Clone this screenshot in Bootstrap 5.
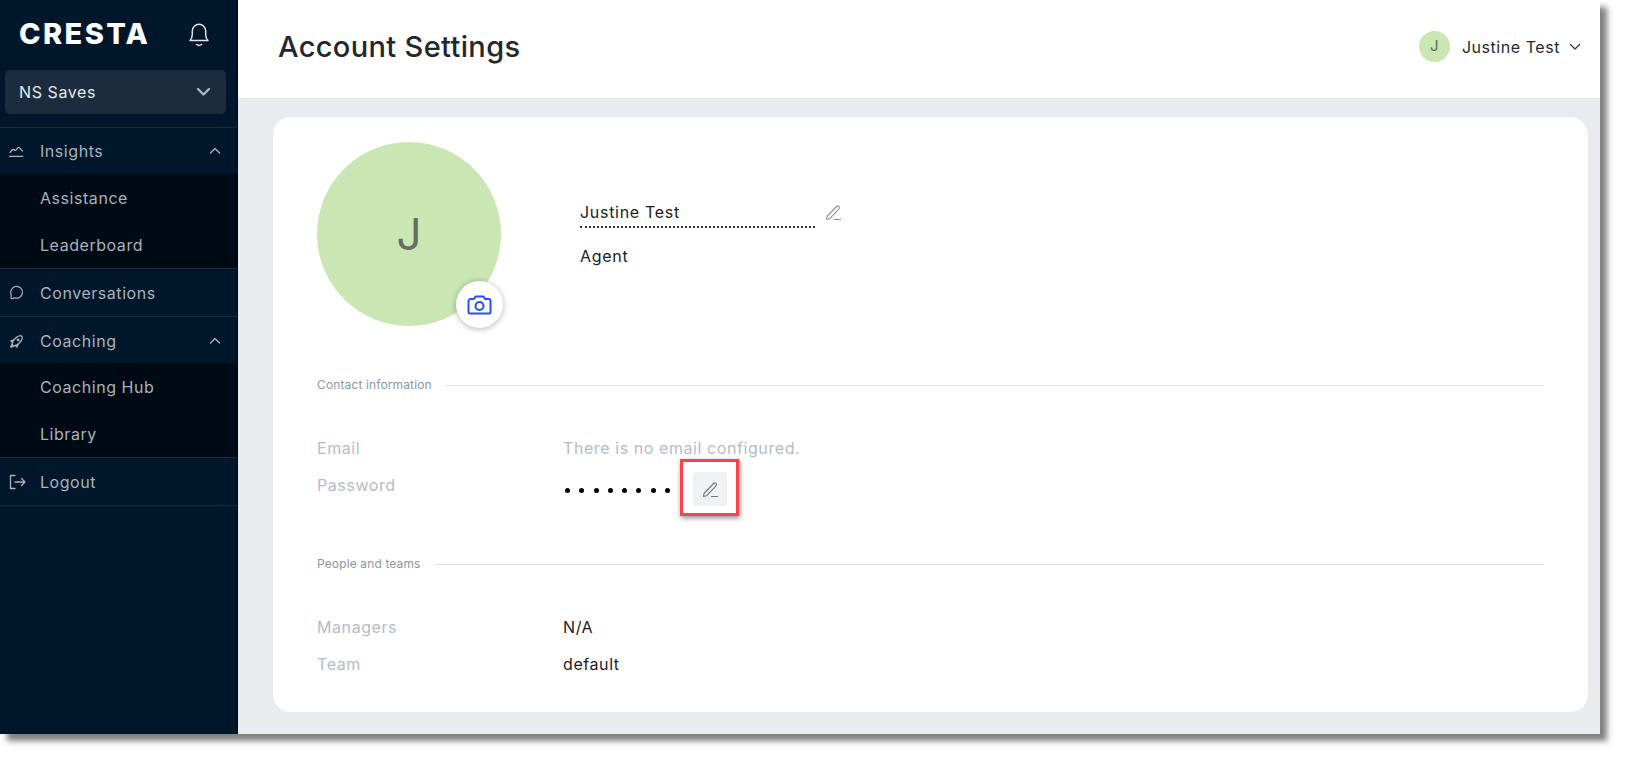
<!DOCTYPE html>
<html lang="en">
<head>
  <meta charset="UTF-8" />
  <meta name="viewport" content="width=device-width, initial-scale=1.0" />
  <title>Account Settings</title>
  <link href="https://cdn.jsdelivr.net/npm/bootstrap@5.3.0/dist/css/bootstrap.min.css" rel="stylesheet" />
  <style>
    html, body {
      height: 100%;
    }
    body {
      background: #fff;
      font-family: Inter, "Liberation Sans", sans-serif;
    }
    #appFrame {
      width: 1600px;
      height: 734px;
      box-shadow: 7px 7px 6px rgba(0, 0, 0, .5);
    }
    #sideBar {
      width: 238px;
      background: #00172b;
      border-right: 1px solid #000;
      color: #a9b2bc;
    }
    #logoRow {
      height: 70px;
      padding: 0 26px 4px 19px;
    }
    #logoText {
      font-weight: 800;
      font-size: 29px;
      line-height: 1;
      letter-spacing: 2.4px;
      color: #fff;
    }
    #bellIcon {
      margin-top: 2px;
    }
    #orgSelect {
      height: 44px;
      margin: 0 11px 13px 5px;
      padding: 0 15px 0 14px;
      background: #1a2c3e;
      border-radius: 5px;
      color: #e6e9ec;
      letter-spacing: .6px;
    }
    .sideRow {
      height: 47px;
      padding: 0 16px 0 9px;
      border-top: 1px solid #1a2d40;
      letter-spacing: .55px;
    }
    .tallRow {
      height: 48px;
    }
    .coachRow {
      padding-top: 2px;
    }
    .endRow {
      height: 0;
    }
    .sideIcon {
      width: 31px;
      flex: none;
    }
    .subMenu {
      background: #000a14;
    }
    .subRow {
      height: 47px;
      padding-left: 40px;
      letter-spacing: .55px;
    }
    #pageHead {
      height: 99px;
      padding: 0 19px 3px 40px;
      border-bottom: 1px solid #e3e5ea;
    }
    #pageTitle {
      font-size: 29px;
      font-weight: 500;
      color: #22272e;
      letter-spacing: .35px;
    }
    #userMenu {
      margin-bottom: 2px;
    }
    #userName {
      color: #24292f;
      letter-spacing: .55px;
    }
    #userDot {
      width: 31px;
      height: 31px;
      margin-right: 12px;
      background: #c9e6b3;
      color: #5f6b5b;
      font-size: 15px;
    }
    #userCaret {
      margin-left: 9px;
    }
    #mainArea {
      background: #e9ebef;
      padding: 18px 12px 22px 35px;
      min-height: 0;
    }
    #settingsCard {
      border: 0;
      border-radius: 18px;
      padding: 25px 44px 0 44px;
      height: 595px;
    }
    #bigAvatar {
      width: 184px;
      height: 184px;
      background: #c9e6b3;
      color: #656e5f;
      font-size: 44px;
      font-weight: 400;
    }
    #cameraBtn {
      width: 47px;
      height: 47px;
      right: -2px;
      bottom: -2px;
      background: #fff;
      box-shadow: 0 1px 6px rgba(0, 0, 0, .3);
    }
    #nameBlock {
      margin: 58px 0 0 79px;
      color: #1c2025;
      letter-spacing: .7px;
    }
    #nameField {
      width: 235px;
      height: 28px;
      border-bottom: 2px dotted #333;
    }
    #namePencil {
      margin: 4px 0 0 10px;
    }
    .sectionHead {
      height: 18px;
      font-size: 12px;
      color: #8d96a1;
      letter-spacing: .13px;
    }
    .sectionLine {
      height: 1px;
      margin-left: 13px;
      background: #e1e3e7;
    }
    .fieldRow {
      height: 24px;
      margin-bottom: 13px;
      letter-spacing: .58px;
      color: #1c2025;
    }
    .fieldName {
      width: 246px;
      flex: none;
      color: #b4bcc7;
    }
    .fieldMuted {
      color: #b4bcc7;
    }
    #pwDots {
      gap: 9.3px;
      margin-left: 2px;
      margin-top: 10px;
    }
    #pwDots span {
      width: 5px;
      height: 5px;
      background: #000;
      border-radius: 50%;
    }
    #pwEdit {
      width: 34px;
      height: 34px;
      margin-left: 23px;
      margin-top: 8px;
      background: #f0f1f3;
      border-radius: 3px;
    }
    #redMark {
      inset: -13px -12px -10px -13px;
      border: 3px solid #f5444a;
      box-shadow: 1px 2px 5px rgba(0, 0, 0, .45);
    }
    .contactHead {
      margin: 50px 0 42px;
    }
    .peopleHead {
      margin: 45px 0 42px;
    }
  </style>
</head>
<body>
  <div id="appFrame" class="d-flex">
    <aside id="sideBar" class="flex-shrink-0">
      <div id="logoRow" class="d-flex align-items-center justify-content-between">
        <span id="logoText">CRESTA</span>
        <svg id="bellIcon" width="24" height="26" viewBox="0 0 24 26" fill="none" stroke="#e0e3e7" stroke-width="1.5" stroke-linecap="round" stroke-linejoin="round"><path d="M3 19.500c1.600-1.600 2.300-3.500 2.300-6V10a6.700 6.700 0 0 1 13.400 0v3.500c0 2.500.7 4.400 2.300 6z"/><path d="M9.500 23.500c1.400 1 3.600 1 5 0"/></svg>
      </div>
      <div id="orgSelect" class="d-flex align-items-center justify-content-between">
        <span>NS Saves</span>
        <svg width="15" height="10" viewBox="0 0 15 10" fill="none" stroke="#aeb6bf" stroke-width="2.400" stroke-linecap="round" stroke-linejoin="round"><path d="M2 2l5.500 5.500L13 2"/></svg>
      </div>

      <div class="sideRow d-flex align-items-center">
        <span class="sideIcon d-flex"><svg width="15" height="14" viewBox="0 0 15 14" fill="none" stroke="#aab3bd" stroke-width="1.300" stroke-linecap="round" stroke-linejoin="round"><path d="M1 8.500c1-1.500 2-2.800 3-3 1-.2 1.500 1 2.500.8 1-.2 2-3 3-3 1.200 0 2.200 2.500 4 3.700"/><path d="M.7 12.300h13"/></svg></span>
        <span class="flex-grow-1">Insights</span>
        <svg width="12" height="8" viewBox="0 0 12 8" fill="none" stroke="#a9b2bc" stroke-width="1.400" stroke-linecap="round" stroke-linejoin="round"><path d="M1.500 6L6 1.500 10.500 6"/></svg>
      </div>
      <div class="subMenu">
        <div class="subRow d-flex align-items-center">Assistance</div>
        <div class="subRow d-flex align-items-center">Leaderboard</div>
      </div>

      <div class="sideRow tallRow d-flex align-items-center">
        <span class="sideIcon d-flex"><svg width="15" height="15" viewBox="0 0 16 16" fill="none" stroke="#a9b2bc" stroke-width="1.300" stroke-linecap="round" stroke-linejoin="round"><path d="M3 14.500c1 0 2-.3 2.700-.9a6.300 6.300 0 1 0-3.500-3.600c.3 1 .2 3-.2 4 .3.300.6.500 1 .5z"/></svg></span>
        <span>Conversations</span>
      </div>

      <div class="sideRow coachRow d-flex align-items-center">
        <span class="sideIcon d-flex"><svg width="15" height="15" viewBox="0 0 16 16" fill="none" stroke="#aab3bd" stroke-width="1.500" stroke-linecap="round" stroke-linejoin="round"><ellipse cx="8.700" cy="7.300" rx="6.800" ry="3.300" transform="rotate(-45 8.700 7.300)"/><path d="M4.800 6.500L2 7.500l2 1.500M9.500 11.200L8.500 14 7 12"/><path d="M3.500 11c-.8.700-1.500 1.700-1.500 3 1.300 0 2.300-.7 3-1.500"/><circle cx="9.700" cy="6.300" r=".8"/></svg></span>
        <span class="flex-grow-1">Coaching</span>
        <svg width="12" height="8" viewBox="0 0 12 8" fill="none" stroke="#a9b2bc" stroke-width="1.400" stroke-linecap="round" stroke-linejoin="round"><path d="M1.500 6L6 1.500 10.500 6"/></svg>
      </div>
      <div class="subMenu">
        <div class="subRow d-flex align-items-center">Coaching Hub</div>
        <div class="subRow d-flex align-items-center">Library</div>
      </div>

      <div class="sideRow tallRow d-flex align-items-center">
        <span class="sideIcon d-flex"><svg width="17" height="16" viewBox="0 0 17 16" fill="none" stroke="#a9b2bc" stroke-width="1.300" stroke-linecap="round" stroke-linejoin="round"><path d="M6 1.500H1.500v13H6"/><path d="M6 8h10M12.500 4.500L16 8l-3.500 3.500"/></svg></span>
        <span>Logout</span>
      </div>
      <div class="sideRow endRow"></div>
    </aside>

    <div class="flex-grow-1 d-flex flex-column">
      <header id="pageHead" class="d-flex align-items-center justify-content-between flex-shrink-0">
        <h1 id="pageTitle" class="m-0">Account Settings</h1>
        <div id="userMenu" class="d-flex align-items-center">
          <span id="userDot" class="rounded-circle d-flex align-items-center justify-content-center">J</span>
          <span id="userName">Justine Test</span>
          <svg id="userCaret" width="12" height="8" viewBox="0 0 12 8" fill="none" stroke="#333" stroke-width="1.200" stroke-linecap="round" stroke-linejoin="round"><path d="M1.500 1.500L6 6l4.500-4.500"/></svg>
        </div>
      </header>

      <main id="mainArea" class="flex-grow-1">
        <div id="settingsCard" class="card">
          <div class="d-flex">
            <div class="position-relative flex-shrink-0">
              <div id="bigAvatar" class="rounded-circle d-flex align-items-center justify-content-center">J</div>
              <div id="cameraBtn" class="position-absolute rounded-circle d-flex align-items-center justify-content-center">
                <svg width="25" height="20" viewBox="0 0 25 20" fill="none" stroke="#2450f5" stroke-width="2" stroke-linecap="round" stroke-linejoin="round"><path d="M1.500 6a2 2 0 0 1 2-2h3.500l1.500-2.500h8L18 4h3.500a2 2 0 0 1 2 2v11a1.500 1.500 0 0 1-1.500 1.500H3A1.500 1.500 0 0 1 1.500 17z"/><circle cx="12.500" cy="11" r="4"/></svg>
              </div>
            </div>
            <div id="nameBlock">
              <div class="d-flex">
                <div id="nameField">Justine Test</div>
                <svg id="namePencil" width="17" height="17" viewBox="0 0 17 17" fill="none" stroke="#8b929c" stroke-width="1.100" stroke-linecap="round" stroke-linejoin="round"><path d="M2 12.500L11.500 2.500a1.700 1.700 0 0 1 2.500 2.400L4.500 14.800l-3 .7z"/><path d="M9.500 15.500h6"/></svg>
              </div>
              <div class="mt-3">Agent</div>
            </div>
          </div>

          <div class="sectionHead contactHead d-flex align-items-center">
            <span>Contact information</span>
            <div class="sectionLine flex-grow-1"></div>
          </div>
          <div class="fieldRow d-flex align-items-center">
            <span class="fieldName">Email</span>
            <span class="fieldMuted">There is no email configured.</span>
          </div>
          <div class="fieldRow d-flex align-items-center">
            <span class="fieldName">Password</span>
            <div id="pwDots" class="d-flex">
              <span></span><span></span><span></span><span></span><span></span><span></span><span></span><span></span>
            </div>
            <div id="pwEdit" class="position-relative d-flex align-items-center justify-content-center flex-shrink-0">
              <svg width="17" height="17" viewBox="0 0 17 17" fill="none" stroke="#6f7680" stroke-width="1.100" stroke-linecap="round" stroke-linejoin="round"><path d="M2 12.500L11.500 2.500a1.700 1.700 0 0 1 2.500 2.400L4.500 14.800l-3 .7z"/><path d="M9.500 15.500h6"/></svg>
              <div id="redMark" class="position-absolute"></div>
            </div>
          </div>

          <div class="sectionHead peopleHead d-flex align-items-center">
            <span>People and teams</span>
            <div class="sectionLine flex-grow-1"></div>
          </div>
          <div class="fieldRow d-flex align-items-center">
            <span class="fieldName">Managers</span>
            <span>N/A</span>
          </div>
          <div class="fieldRow d-flex align-items-center">
            <span class="fieldName">Team</span>
            <span>default</span>
          </div>
        </div>
      </main>
    </div>
  </div>
  <script src="https://cdn.jsdelivr.net/npm/bootstrap@5.3.0/dist/js/bootstrap.bundle.min.js"></script>
</body>
</html>
